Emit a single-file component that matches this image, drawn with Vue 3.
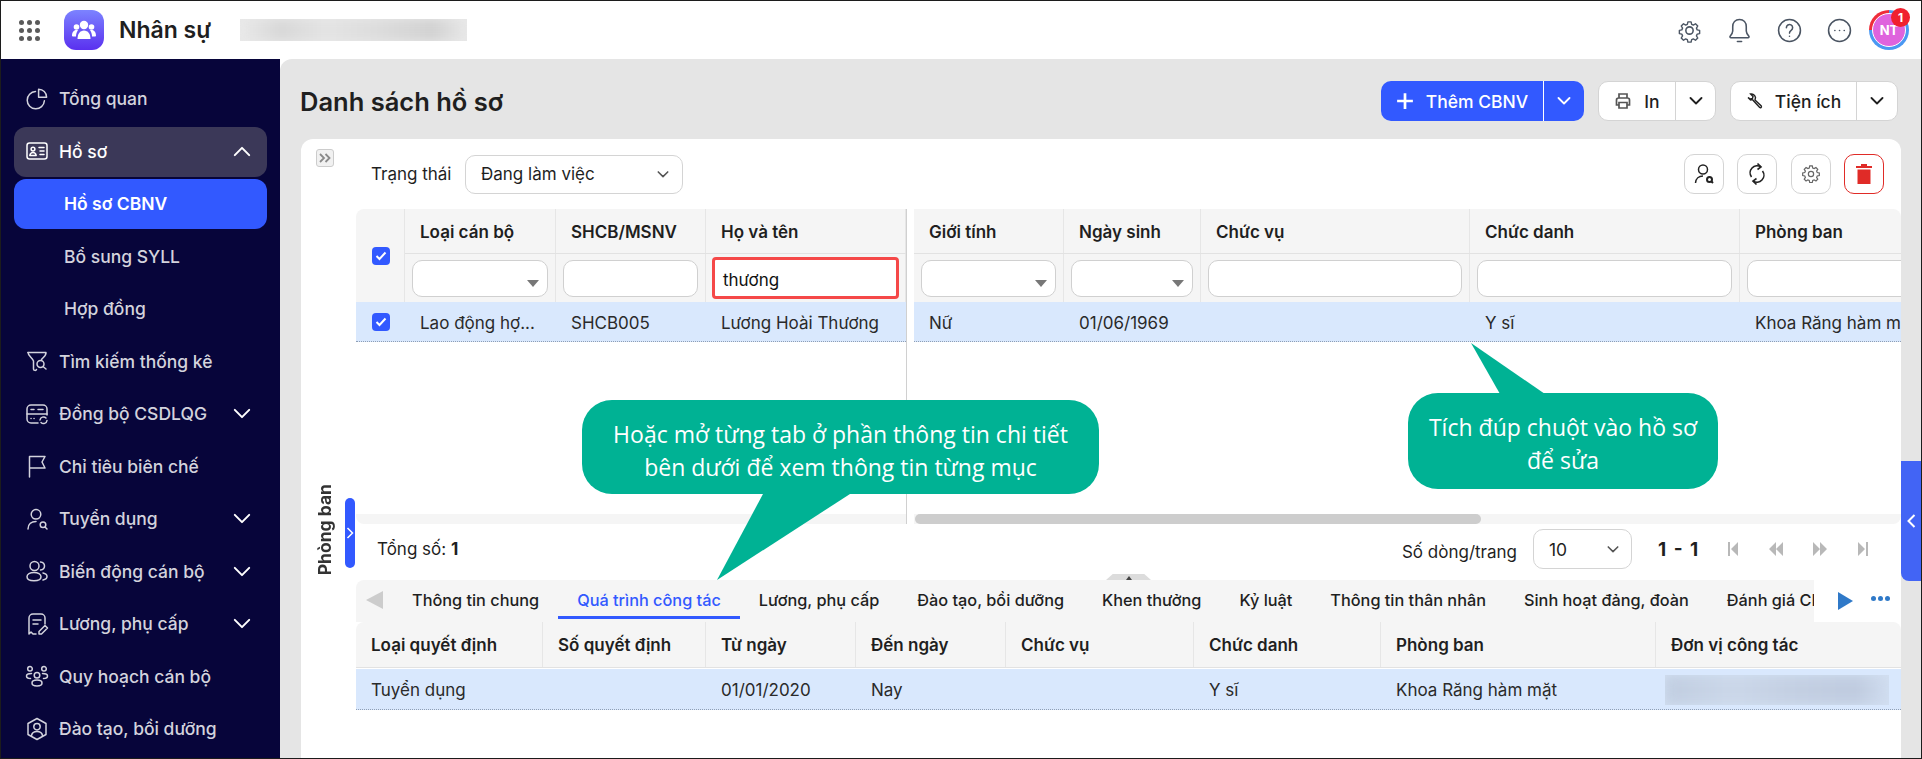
<script setup>
const menu = [
  { label: 'Tổng quan', icon: ['M10.5 4.6a8.6 8.6 0 1 0 8.9 9.2', 'M13.6 2.2a8 8 0 0 1 8 8h-8z'] },
  { label: 'Hồ sơ', open: true, arrow: 'up', icon: ['M4.5 4h15A2.5 2.5 0 0 1 22 6.5v11a2.5 2.5 0 0 1-2.5 2.5h-15A2.5 2.5 0 0 1 2 17.500v-11A2.500 2.500 0 0 1 4.500 4z', 'M8 8.200a1.900 1.900 0 1 0 0 3.800a1.900 1.900 0 0 0 0-3.800z', 'M4.800 16.500c.4-2 1.700-3 3.200-3s2.800 1 3.200 3z', 'M14 8.500h5M15 12h4M15 15.500h4'] },
  { label: 'Hồ sơ CBNV', sub: true, active: true },
  { label: 'Bổ sung SYLL', sub: true },
  { label: 'Hợp đồng', sub: true },
  { label: 'Tìm kiếm thống kê', icon: ['M3 3.500h18c.4 3-3 5-4.500 7', 'M3 3.500c0 3 4.500 5.500 5.500 8.500v8c0 1.500 2.500 2 3 .5', 'M15.500 11.500a3.500 3.500 0 1 0 0 7a3.500 3.500 0 0 0 0-7zM18 17.500l3 2.500'] },
  { label: 'Đồng bộ CSDLQG', arrow: 'down', icon: ['M13 21H6a4 4 0 0 1-4-4V7a4 4 0 0 1 4-4h12a4 4 0 0 1 4 4v6', 'M2 12h20', 'M6 7.500h3M13 7.500h5M6 16.500h.1M9 16.500h.1', 'M15 18a3.500 3.500 0 0 1 6-2M22 18.500a3.500 3.500 0 0 1-6 2'] },
  { label: 'Chỉ tiêu biên chế', icon: ['M4.500 23V2.500H20l-3 5.500 3 6H4.500'] },
  { label: 'Tuyển dụng', arrow: 'down', icon: ['M11 2.500a4.800 4.800 0 1 0 0 9.600a4.800 4.800 0 0 0 0-9.600z', 'M3 22c0-5 3.500-7.500 8-7.500', 'M18 15a2.800 2.800 0 1 0 0 5.600a2.800 2.800 0 0 0 0-5.600zM20 20l2 2'] },
  { label: 'Biến động cán bộ', arrow: 'down', icon: ['M9.500 2.500a4.500 4.500 0 1 0 0 9a4.500 4.500 0 0 0 0-9z', 'M9 13.500c-4 0-7 1.800-7 4.300s3 4 7 4s7-1.500 7-4s-3-4.300-7-4.300z', 'M15.500 3c2.500.3 4 2 4 4s-1.500 3.700-4 4', 'M18 14c2.500.6 4 1.800 4 3.500s-1.500 3-4 3.500'] },
  { label: 'Lương, phụ cấp', arrow: 'down', icon: ['M11 22H8l-2-2-2 2V6a4 4 0 0 1 4-4h8a4 4 0 0 1 4 4v6', 'M8 8h8M8 12h5', 'M14 22v-2.500l6-6 2.500 2.500-6 6z'] },
  { label: 'Quy hoạch cán bộ', icon: ['M5 2.500a2.300 2.300 0 1 0 0 4.600a2.300 2.300 0 0 0 0-4.600zM19 2.500a2.300 2.300 0 1 0 0 4.600a2.300 2.300 0 0 0 0-4.600z', 'M12 8.500a2.800 2.800 0 1 0 0 5.600a2.800 2.800 0 0 0 0-5.600z', 'M12 16c-3 0-5 1.200-5 3s2 3 5 3s5-1.200 5-3s-2-3-5-3z', 'M6.500 9.500c-3 0-5 1-5 2.500s1.500 2.500 4 2.500M17.500 9.500c3 0 5 1 5 2.500s-1.500 2.500-4 2.500'] },
  { label: 'Đào tạo, bồi dưỡng', icon: ['M12 1.500l9 5v11l-9 5-9-5v-11z', 'M12 6.500a3.200 3.200 0 1 0 0 6.400a3.200 3.200 0 0 0 0-6.400z', 'M6.500 18.500c.5-2.800 2.800-4 5.500-4s5 1.200 5.500 4'] }
]

const frozenCols = [
  { title: 'Loại cán bộ', w: 151, filter: 'select', value: 'Lao động hợ...' },
  { title: 'SHCB/MSNV', w: 150, filter: 'input', value: 'SHCB005' },
  { title: 'Họ và tên', w: 200, filter: 'search', value: 'Lương Hoài Thương' }
]
const scrollCols = [
  { title: 'Giới tính', w: 150, filter: 'select', value: 'Nữ' },
  { title: 'Ngày sinh', w: 137, filter: 'select', value: '01/06/1969' },
  { title: 'Chức vụ', w: 269, filter: 'input', value: '' },
  { title: 'Chức danh', w: 270, filter: 'input', value: 'Y sĩ' },
  { title: 'Phòng ban', w: 219, filter: 'input', value: 'Khoa Răng hàm mặt' }
]
const tabs = ['Thông tin chung', 'Quá trình công tác', 'Lương, phụ cấp', 'Đào tạo, bồi dưỡng', 'Khen thưởng', 'Kỷ luật', 'Thông tin thân nhân', 'Sinh hoạt đảng, đoàn', 'Đánh giá CBNV']
const detailCols = [
  { title: 'Loại quyết định', w: 187, value: 'Tuyển dụng' },
  { title: 'Số quyết định', w: 163, value: '' },
  { title: 'Từ ngày', w: 150, value: '01/01/2020' },
  { title: 'Đến ngày', w: 150, value: 'Nay' },
  { title: 'Chức vụ', w: 188, value: '' },
  { title: 'Chức danh', w: 187, value: 'Y sĩ' },
  { title: 'Phòng ban', w: 275, value: 'Khoa Răng hàm mặt' },
  { title: 'Đơn vị công tác', w: 245, value: '', blur: true }
]
</script>

<template>
  <div class="app">
    <header class="topbar">
      <div class="dots"><i v-for="n in 9" :key="n"></i></div>
      <div class="logo">
        <svg width="26" height="22" viewBox="0 0 26 22" fill="#fff">
          <circle cx="13" cy="6" r="4.200" />
          <circle cx="5.500" cy="8" r="2.800" />
          <circle cx="20.500" cy="8" r="2.800" />
          <path d="M6.500 20c0-5 2.500-8.500 6.500-8.500s6.500 3.500 6.500 8.500z" />
          <path d="M1 17c0-3.500 1.500-6 4.500-6c.6 0 1.100.1 1.500.3C5.800 13 5 15 5 17.500H2c-.6 0-1-.2-1-.5zM25 17c0-3.500-1.500-6-4.500-6c-.6 0-1.100.1-1.500.3c1.200 1.700 2 3.700 2 6.200h3c.6 0 1-.2 1-.5z" />
        </svg>
      </div>
      <div class="app-name">Nhân sự</div>
      <div class="blur-box"><div class="blur-fill"></div></div>
      <div class="top-icons">
        <svg class="top-icon" viewBox="0 0 24 24"><path d="M10.300 2.800h3.400l.6 2.600 1.800.8 2.300-1.400 2.400 2.400-1.400 2.300.8 1.800 2.600.6v3.400l-2.600.6-.8 1.800 1.400 2.300-2.400 2.400-2.300-1.400-1.800.8-.6 2.600h-3.400l-.6-2.600-1.800-.8-2.300 1.400-2.400-2.400 1.400-2.300-.8-1.800-2.600-.6v-3.400l2.600-.6.8-1.800-1.400-2.300 2.400-2.400 2.300 1.400 1.800-.8z" transform="translate(1.200 1.200) scale(.9)" /><circle cx="12" cy="12" r="3.500" /></svg>
        <svg class="top-icon" viewBox="0 0 24 24"><path d="M12 1.500c-4 0-6.500 3-6.500 7v4c0 2-1.200 3.500-2.500 5c-.5.600 0 1.500.8 1.500h16.400c.8 0 1.300-.9.800-1.500c-1.300-1.500-2.500-3-2.500-5v-4c0-4-2.500-7-6.500-7z" /><path d="M10 22.500h4" /></svg>
        <svg class="top-icon" viewBox="0 0 24 24"><circle cx="12" cy="12" r="10.500" /><path d="M9 9.300a3 3 0 1 1 4.600 2.500c-1 .7-1.600 1.300-1.600 2.700M12 17.500v.1" /></svg>
        <svg class="top-icon" viewBox="0 0 24 24"><circle cx="12" cy="12" r="10.500" /><path d="M7.500 12h.1M12 12h.1M16.500 12h.1" /></svg>
        <div class="avatar">
          <div class="avatar-in">NT</div>
          <span class="badge">1</span>
        </div>
      </div>
    </header>

    <div class="body">
      <aside class="sidebar">
        <div
          v-for="m in menu"
          :key="m.label"
          class="menu-item"
          :class="{ open: m.open, active: m.active, sub: m.sub }"
        >
          <svg v-if="m.icon" class="menu-icon" viewBox="0 0 24 24">
            <path v-for="d in m.icon" :key="d" :d="d" />
          </svg>
          <span class="menu-label">{{ m.label }}</span>
          <svg v-if="m.arrow" class="menu-arrow" viewBox="0 0 20 12">
            <path :d="m.arrow === 'up' ? 'M2 10l8-8 8 8' : 'M2 2l8 8 8-8'" />
          </svg>
        </div>
      </aside>

      <main class="main">
        <div class="title-row">
          <h1 class="title">Danh sách hồ sơ</h1>
          <div class="actions">
            <div class="split primary">
              <div class="split-main add-main">
                <svg width="18" height="18" viewBox="0 0 16 16"><path d="M8 1v14M1 8h14" stroke="#fff" stroke-width="2.400" /></svg>
                <span>Thêm CBNV</span>
              </div>
              <div class="split-arrow arrow-primary"><svg class="chev" viewBox="0 0 14 8"><path d="M1.500 1l5.500 5.500L12.500 1" /></svg></div>
            </div>
            <div class="split print">
              <div class="split-main print-main">
                <svg width="18" height="18" viewBox="0 0 18 18" fill="none" stroke="#555" stroke-width="1.700"><path d="M5 6V2h8v4M5 13H2.500V8A2 2 0 0 1 4.500 6h9a2 2 0 0 1 2 2v5H13" /><path d="M5 10.500h8V16H5z" /></svg>
                <span>In</span>
              </div>
              <div class="split-arrow print-arrow"><svg class="chev" viewBox="0 0 14 8"><path d="M1.500 1l5.500 5.500L12.500 1" /></svg></div>
            </div>
            <div class="split tools">
              <div class="split-main tools-main">
                <svg width="18" height="18" viewBox="0 0 18 18" fill="none" stroke="#222" stroke-width="1.400"><path d="M2 5.500L4.500 8l2-.5L7.700 9l6 6.500c1 .8 2.200-.4 1.600-1.500L9 8l.5-2.500C9 3 6.500 1.500 4.500 2L7 4.500 6.500 6.500 4.500 7z" /></svg>
                <span>Tiện ích</span>
              </div>
              <div class="split-arrow tools-arrow"><svg class="chev" viewBox="0 0 14 8"><path d="M1.500 1l5.500 5.500L12.500 1" /></svg></div>
            </div>
          </div>
        </div>

        <div class="work">
          <section class="card">
            <div class="rail">
              <div class="rail-btn">
                <svg width="12" height="10" viewBox="0 0 12 10" fill="none" stroke="#8a8a8a" stroke-width="1.800"><path d="M1 1l4 4-4 4M6.500 1l4 4-4 4" /></svg>
              </div>
              <div class="rail-side">
                <span class="rail-text">Phòng ban</span>
                <div class="rail-handle">
                  <svg width="8" height="12" viewBox="0 0 8 12" fill="none" stroke="#fff" stroke-width="1.500"><path d="M1.500 1l5 5-5 5" /></svg>
                </div>
              </div>
            </div>

            <div class="content">
              <div class="toolbar">
                <span class="tb-label">Trạng thái</span>
                <div class="tb-select">
                  <span>Đang làm việc</span>
                  <svg class="chev small" viewBox="0 0 14 8"><path d="M1.500 1l5.500 5.500L12.500 1" /></svg>
                </div>
                <div class="tb-icons">
                  <div class="tb-icon">
                    <svg width="24" height="24" viewBox="0 0 24 24" fill="none" stroke="#222" stroke-width="1.500"><circle cx="11" cy="7.500" r="4.500" /><path d="M3.500 21c.3-4.500 3.500-7 7.500-7" /><circle cx="17.500" cy="17.500" r="2.500" stroke-width="2" /><path d="M19.500 19.500l1.500 1.500" stroke-width="2" /></svg>
                  </div>
                  <div class="tb-icon">
                    <svg width="22" height="24" viewBox="0 0 22 24" fill="none" stroke="#222" stroke-width="1.600"><path d="M5.500 15a7 7 0 0 1 9.500-10" /><path d="M11.500 1.500L15 5l-3.500 2.500" /><path d="M16.500 9a7 7 0 0 1-9.500 10" /><path d="M10.500 22.500L7 19l3.500-2.500" /></svg>
                  </div>
                  <div class="tb-icon">
                    <svg width="18" height="18" viewBox="0 0 24 24" fill="none" stroke="#666" stroke-width="1.600"><path d="M10.300 2h3.400l.6 2.800 1.900.8 2.400-1.500 2.400 2.400-1.500 2.400.8 1.900 2.800.6v3.400l-2.800.6-.8 1.900 1.500 2.400-2.400 2.400-2.400-1.500-1.900.8-.6 2.800h-3.400l-.6-2.800-1.900-.8-2.400 1.500-2.400-2.400 1.500-2.400-.8-1.900-2.800-.6v-3.400l2.800-.6.8-1.900-1.500-2.400 2.400-2.400 2.400 1.500 1.900-.8z" transform="translate(0 -.8)" /><circle cx="12" cy="12" r="3.500" /></svg>
                  </div>
                  <div class="tb-icon danger">
                    <svg width="16" height="20" viewBox="0 0 16 20" fill="#e02b27"><path d="M5 0h6v2h5v2H0V2h5z" /><path d="M1.500 5.500h13V20h-13z" /></svg>
                  </div>
                </div>
              </div>

              <div class="grid-wrap">
                <div class="pane frozen">
                  <div class="head">
                    <div class="chk-cell">
                      <span class="chk"><svg width="12" height="10" viewBox="0 0 12 10" fill="none" stroke="#fff" stroke-width="2"><path d="M1.500 5l3 3 6-6.500" /></svg></span>
                    </div>
                    <div class="head-cols">
                      <div class="head-row">
                        <div v-for="c in frozenCols" :key="c.title" class="th" :style="{ width: c.w + 'px' }">{{ c.title }}</div>
                      </div>
                      <div class="filter-row">
                        <div v-for="c in frozenCols" :key="c.title" class="fc" :style="{ width: c.w + 'px' }">
                          <div v-if="c.filter === 'search'" class="search-box">thương</div>
                          <div v-else class="finput"><i v-if="c.filter === 'select'" class="tri"></i></div>
                        </div>
                      </div>
                    </div>
                  </div>
                  <div class="row">
                    <div class="chk-cell row-chk">
                      <span class="chk"><svg width="12" height="10" viewBox="0 0 12 10" fill="none" stroke="#fff" stroke-width="2"><path d="M1.500 5l3 3 6-6.500" /></svg></span>
                    </div>
                    <div v-for="c in frozenCols" :key="c.title" class="td" :style="{ width: c.w + 'px' }">{{ c.value }}</div>
                  </div>
                  <div class="hbar"></div>
                </div>
                <div class="gutter"><div class="gutter-head"></div></div>
                <div class="pane scroller">
                  <div class="head-cols">
                    <div class="head-row">
                      <div v-for="c in scrollCols" :key="c.title" class="th" :style="{ width: c.w + 'px' }">{{ c.title }}</div>
                    </div>
                    <div class="filter-row">
                      <div v-for="c in scrollCols" :key="c.title" class="fc" :style="{ width: c.w + 'px' }">
                        <div class="finput"><i v-if="c.filter === 'select'" class="tri"></i></div>
                      </div>
                    </div>
                  </div>
                  <div class="row">
                    <div v-for="c in scrollCols" :key="c.title" class="td" :style="{ width: c.w + 'px' }">{{ c.value }}</div>
                  </div>
                  <div class="hbar"><div class="thumb"></div></div>
                </div>
              </div>

              <div class="pager">
                <div class="total">Tổng số: <b>1</b></div>
                <div class="pager-right">
                  <span class="per-label">Số dòng/trang</span>
                  <div class="per-select">
                    <span>10</span>
                    <svg class="chev small" viewBox="0 0 14 8"><path d="M1.500 1l5.500 5.500L12.500 1" /></svg>
                  </div>
                  <b class="range">1 - 1</b>
                  <div class="pg-icons">
                    <svg width="12" height="18" viewBox="0 0 12 18" fill="#b8b8b8"><path d="M1 2h2v14H1zM11 2v14L4 9z" /></svg>
                    <svg width="16" height="18" viewBox="0 0 16 18" fill="#b8b8b8"><path d="M8 2v14L1 9zM15 2v14L8 9z" /></svg>
                    <svg width="16" height="18" viewBox="0 0 16 18" fill="#b8b8b8"><path d="M1 2v14l7-7zM8 2v14l7-7z" /></svg>
                    <svg width="12" height="18" viewBox="0 0 12 18" fill="#b8b8b8"><path d="M9 2h2v14H9zM1 2v14l7-7z" /></svg>
                  </div>
                </div>
                <div class="drag-handle"><i></i></div>
              </div>

              <div class="tabs-row">
                <div class="tabs">
                  <svg class="tab-prev" width="17" height="18" viewBox="0 0 17 18" fill="#ccc"><path d="M17 0v18L0 9z" /></svg>
                  <div v-for="t in tabs" :key="t" class="tab" :class="{ current: t === 'Quá trình công tác' }">{{ t }}</div>
                </div>
                <div class="tab-tools">
                  <svg width="15" height="18" viewBox="0 0 15 18" fill="#2f79c8"><path d="M0 0v18l15-9z" /></svg>
                  <div class="more"><i></i><i></i><i></i></div>
                </div>
              </div>

              <div class="detail">
                <div class="d-head">
                  <div v-for="c in detailCols" :key="c.title" class="d-th" :style="{ width: c.w + 'px' }">{{ c.title }}</div>
                </div>
                <div class="d-row">
                  <div v-for="c in detailCols" :key="c.title" class="d-td" :style="{ width: c.w + 'px' }">
                    <div v-if="c.blur" class="d-blur"><div class="d-blur-fill"></div></div>
                    <template v-else>{{ c.value }}</template>
                  </div>
                </div>
              </div>
            </div>
          </section>

          <div class="side-col">
            <div class="side-tab">
              <svg width="9" height="14" viewBox="0 0 9 14" fill="none" stroke="#fff" stroke-width="2"><path d="M7.500 1L1.500 7l6 6" /></svg>
            </div>
          </div>
        </div>
      </main>
    </div>

    <div class="callout left-call">
      Hoặc mở từng tab ở phần thông tin chi tiết<br />bên dưới để xem thông tin từng mục
      <svg class="tail tail-left" width="133" height="86" viewBox="0 0 133 86"><path d="M46 0L0 86 133 0z" fill="#00b294" /></svg>
    </div>
    <div class="callout right-call">
      Tích đúp chuột vào hồ sơ<br />để sửa
      <svg class="tail tail-right" width="74" height="51" viewBox="0 0 74 51"><path d="M29 51L0 0l74 51z" fill="#00b294" /></svg>
    </div>
  </div>
</template>

<style scoped>
.app {
  position: relative;
  width: 1922px;
  height: 759px;
  border: 1px solid #1c1c1c;
  box-sizing: border-box;
  display: flex;
  flex-direction: column;
  overflow: hidden;
  background: #fff;
  color: #1f1f1f;
}
.topbar {
  height: 58px;
  flex: none;
  display: flex;
  align-items: center;
  background: #fff;
  padding-left: 18px;
}
.dots {
  width: 21px;
  display: grid;
  grid-template-columns: repeat(3, 5px);
  gap: 3px;
}
.dots i {
  width: 5px;
  height: 5px;
  border-radius: 50%;
  background: #5a5a5a;
}
.logo {
  width: 40px;
  height: 40px;
  margin-left: 24px;
  border-radius: 12px;
  background: linear-gradient(#7c83ff, #5a30ef);
  display: flex;
  align-items: center;
  justify-content: center;
}
.app-name {
  margin-left: 15px;
  width: 121px;
  font-size: 23px;
  font-weight: 600;
  white-space: nowrap;
}
.blur-box {
  width: 227px;
  height: 22px;
  overflow: hidden;
  background: #e9e9e9;
}
.blur-fill {
  height: 100%;
  filter: blur(4px);
  background: linear-gradient(90deg, #e9e9e9 0, #d8d8d8 18%, #e4e4e4 38%, #dcdcdc 62%, #d2d2d2 85%, #e8e8e8 100%);
}
.top-icons {
  margin-left: auto;
  display: flex;
  align-items: center;
  margin-right: 12px;
}
.top-icon {
  width: 25px;
  height: 25px;
  margin-right: 25px;
  fill: none;
  stroke: #4b5563;
  stroke-width: 1.500;
  stroke-linecap: round;
  stroke-linejoin: round;
}
.avatar {
  position: relative;
  width: 40px;
  height: 40px;
  margin-left: -8px;
  border-radius: 50%;
  background: conic-gradient(#4a98f2 0 270deg, #ef2d3a 270deg 360deg);
  display: flex;
  align-items: center;
  justify-content: center;
}
.avatar-in {
  width: 32px;
  height: 32px;
  border-radius: 50%;
  border: 1px solid #fff;
  background: #df63dd;
  color: #fff;
  font-size: 13px;
  font-weight: 700;
  display: flex;
  align-items: center;
  justify-content: center;
}
.badge {
  position: absolute;
  top: -2px;
  right: -1px;
  width: 19px;
  height: 19px;
  border-radius: 50%;
  background: #f0202f;
  color: #fff;
  font-size: 12px;
  font-weight: 700;
  display: flex;
  align-items: center;
  justify-content: center;
}

.body {
  flex: 1;
  display: flex;
  min-height: 0;
  background: #fff;
}
.sidebar {
  width: 279px;
  flex: none;
  background: #07053a;
  padding-top: 15px;
  display: flex;
  flex-direction: column;
  gap: 2.5px;
  overflow: hidden;
}
.menu-item {
  flex: none;
  height: 50px;
  box-sizing: border-box;
  margin: 0 13px;
  padding-left: 11px;
  padding-bottom: 1px;
  border-radius: 12px;
  display: flex;
  align-items: center;
  color: #d3d3dd;
  font-size: 17.500px;
  font-weight: 500;
  white-space: nowrap;
}
.menu-item.open {
  background: #3b3858;
  color: #fff;
}
.menu-item.sub {
  padding-left: 50px;
}
.menu-item.active {
  background: #3259ff;
  color: #fff;
  font-weight: 600;
}
.menu-icon {
  width: 24px;
  height: 24px;
  flex: none;
  margin-right: 10px;
  fill: none;
  stroke: currentColor;
  stroke-width: 1.500;
  stroke-linecap: round;
  stroke-linejoin: round;
}
.menu-arrow {
  width: 18px;
  height: 11px;
  margin-left: auto;
  margin-right: 16px;
  fill: none;
  stroke: #fff;
  stroke-width: 2.200;
  stroke-linecap: round;
  stroke-linejoin: round;
}

.main {
  flex: 1;
  min-width: 0;
  background: #e5e5e5;
  border-top-left-radius: 12px;
  display: flex;
  flex-direction: column;
}
.title-row {
  height: 80px;
  flex: none;
  box-sizing: border-box;
  display: flex;
  align-items: center;
  padding: 4px 23px 0 20px;
}
.title {
  margin: 0;
  font-size: 25.500px;
  font-weight: 600;
  color: #1f1f1f;
}
.actions {
  margin-left: auto;
  display: flex;
  gap: 14px;
}
.split {
  height: 40px;
  display: flex;
  border-radius: 10px;
  background: #fff;
  box-sizing: border-box;
  font-size: 17.500px;
  font-weight: 500;
}
.split.print,
.split.tools {
  border: 1px solid #d4d4d4;
}
.split.primary {
  background: #3259ff;
  color: #fff;
  width: 203px;
}
.split.print {
  width: 118px;
}
.split.tools {
  width: 168px;
}
.split-main {
  display: flex;
  align-items: center;
  justify-content: center;
  gap: 12px;
}
.add-main {
  width: 162px;
}
.print-main {
  width: 76px;
}
.tools-main {
  width: 125px;
  gap: 11px;
}
.split-arrow {
  flex: 1;
  display: flex;
  align-items: center;
  justify-content: center;
  border-left: 1px solid #d4d4d4;
}
.arrow-primary {
  border-left-color: #fff;
}
.chev {
  width: 14px;
  height: 8px;
  fill: none;
  stroke: currentColor;
  stroke-width: 1.800;
  stroke-linecap: round;
  stroke-linejoin: round;
}
.chev.small {
  width: 12px;
  height: 7px;
  color: #555;
}

.work {
  flex: 1;
  min-height: 0;
  display: flex;
  padding-left: 21px;
}
.card {
  width: 1600px;
  flex: none;
  background: #fff;
  border-radius: 12px 12px 0 0;
  display: flex;
}
.side-col {
  flex: 1;
  padding-top: 322px;
}
.side-tab {
  height: 120px;
  background: #4264f5;
  border-bottom-left-radius: 8px;
  display: flex;
  align-items: center;
  justify-content: center;
}
.rail {
  width: 55px;
  flex: none;
  display: flex;
  flex-direction: column;
}
.rail-btn {
  width: 18px;
  height: 18px;
  margin: 10px 0 0 15px;
  box-sizing: border-box;
  border: 1px solid #ccc;
  border-radius: 3px;
  background: #f1f1f1;
  display: flex;
  align-items: center;
  justify-content: center;
}
.rail-side {
  margin: 317px 0 0 15px;
  height: 91px;
  display: flex;
  align-items: flex-end;
  gap: 12px;
}
.rail-text {
  writing-mode: vertical-rl;
  transform: rotate(180deg);
  font-size: 17.500px;
  font-weight: 700;
  line-height: 17px;
  white-space: nowrap;
  color: #333;
}
.rail-handle {
  width: 10px;
  height: 70px;
  margin-bottom: 7px;
  border-radius: 5px;
  background: #3259ff;
  display: flex;
  align-items: center;
  justify-content: center;
}

.content {
  flex: 1;
  min-width: 0;
  display: flex;
  flex-direction: column;
}
.toolbar {
  height: 70px;
  flex: none;
  display: flex;
  align-items: center;
  padding: 0 17px 0 15px;
  font-size: 17px;
}
.tb-label {
  width: 94px;
  white-space: nowrap;
}
.tb-select {
  width: 218px;
  height: 39px;
  box-sizing: border-box;
  border: 1px solid #d4d4d4;
  border-radius: 10px;
  padding: 0 13px 0 15px;
  display: flex;
  align-items: center;
  justify-content: space-between;
}
.tb-icons {
  margin-left: auto;
  display: flex;
  gap: 13.500px;
}
.tb-icon {
  width: 40px;
  height: 40px;
  box-sizing: border-box;
  border: 1px solid #d4d4d4;
  border-radius: 10px;
  display: flex;
  align-items: center;
  justify-content: center;
}
.tb-icon.danger {
  border-color: #e02b27;
}

.grid-wrap {
  height: 315px;
  flex: none;
  display: flex;
  font-size: 17px;
}
.pane {
  display: flex;
  flex-direction: column;
}
.frozen {
  width: 550px;
  flex: none;
}
.scroller {
  flex: 1;
  min-width: 0;
  overflow: hidden;
}
.head {
  display: flex;
}
.head-cols {
  background: #f5f5f5;
  flex: none;
}
.frozen .head {
  background: #f5f5f5;
  border-top-left-radius: 8px;
}
.scroller .head-cols {
  border-top-right-radius: 8px;
}
.chk-cell {
  width: 49px;
  flex: none;
  box-sizing: border-box;
  display: flex;
  align-items: center;
  padding-left: 16px;
}
.head .chk-cell {
  border-right: 1px solid #e6e6e6;
  padding-top: 1px;
}
.row-chk {
  padding-top: 1px;
}
.chk {
  width: 18px;
  height: 18px;
  border-radius: 4px;
  background: #3259ff;
  display: flex;
  align-items: center;
  justify-content: center;
}
.head-row {
  height: 45px;
  display: flex;
  border-bottom: 1px solid #e2e2e2;
  box-sizing: border-box;
}
.th {
  flex: none;
  box-sizing: border-box;
  padding: 1px 0 0 15px;
  display: flex;
  align-items: center;
  border-right: 1px solid #e6e6e6;
  font-weight: 600;
  white-space: nowrap;
}
.filter-row {
  height: 48px;
  display: flex;
}
.fc {
  flex: none;
  box-sizing: border-box;
  padding: 6px 7px 5px 7px;
  border-right: 1px solid #e6e6e6;
}
.finput {
  position: relative;
  height: 37px;
  box-sizing: border-box;
  background: #fff;
  border: 1px solid #d0d0d0;
  border-radius: 10px;
}
.tri {
  position: absolute;
  right: 8px;
  top: 19px;
  border-left: 6px solid transparent;
  border-right: 6px solid transparent;
  border-top: 7px solid #777;
}
.search-box {
  height: 42px;
  margin: -3px -1px 0;
  box-sizing: border-box;
  background: #fff;
  border: 3px solid #f54848;
  border-radius: 4px;
  padding: 6px 0 0 8px;
  font-size: 17px;
  line-height: 28px;
  color: #111;
}
.row {
  height: 40px;
  flex: none;
  display: flex;
  align-items: center;
  background: #d9e8fd;
  border-bottom: 1px dotted #8f9fb5;
  box-sizing: border-box;
}
.td {
  flex: none;
  box-sizing: border-box;
  padding: 2px 0 0 15px;
  white-space: nowrap;
  color: #2a2a2a;
}
.hbar {
  height: 10px;
  margin-top: auto;
  flex: none;
  background: #f5f5f5;
  border-bottom-left-radius: 8px;
}
.scroller .hbar {
  border-radius: 0 0 8px 0;
}
.thumb {
  width: 566px;
  height: 100%;
  margin-left: 1px;
  background: #cdcdcd;
  border-radius: 5px;
}
.gutter {
  width: 8px;
  flex: none;
  box-sizing: border-box;
  border-left: 1px solid #d0d0d0;
}
.gutter-head {
  height: 93px;
  border-right: 1px solid #d0d0d0;
  margin-right: -1px;
}

.pager {
  position: relative;
  height: 56px;
  flex: none;
  box-sizing: border-box;
  display: flex;
  align-items: center;
  padding: 0 32px 6px 21px;
  font-size: 17px;
}
.total b {
  font-weight: 700;
}
.pager-right {
  margin-left: auto;
  display: flex;
  align-items: center;
}
.per-label {
  margin-top: 5px;
}
.per-select {
  width: 99px;
  height: 40px;
  margin-left: 16px;
  box-sizing: border-box;
  border: 1px solid #d4d4d4;
  border-radius: 10px;
  display: flex;
  align-items: center;
  justify-content: space-between;
  padding: 0 12px 0 15px;
  font-size: 17.500px;
}
.range {
  margin-left: 26px;
  width: 42px;
  font-size: 19px;
  font-weight: 700;
  word-spacing: 3px;
  white-space: nowrap;
}
.pg-icons {
  margin-left: 27px;
  width: 142px;
  display: flex;
  align-items: center;
  justify-content: space-between;
}
.drag-handle {
  position: absolute;
  left: 750px;
  bottom: 0;
  width: 45px;
  height: 6px;
  background: #dcdcdc;
  clip-path: polygon(15% 0, 85% 0, 100% 100%, 0 100%);
  display: flex;
  justify-content: center;
}
.drag-handle i {
  margin-top: 1px;
  border-left: 3px solid transparent;
  border-right: 3px solid transparent;
  border-bottom: 4px solid #444;
}

.tabs-row {
  height: 42px;
  flex: none;
  display: flex;
  font-size: 16.300px;
}
.tabs {
  width: 1458px;
  flex: none;
  overflow: hidden;
  display: flex;
  align-items: stretch;
  background: #f5f5f5;
  border-top-left-radius: 8px;
  white-space: nowrap;
}
.tab-prev {
  flex: none;
  margin: 11px 10px 0 10px;
}
.tab {
  flex: none;
  height: 39px;
  line-height: 40px;
  padding: 0 19px;
  box-sizing: border-box;
  font-weight: 500;
}
.tab.current {
  color: #3259ff;
  border-bottom: 3px solid #3259ff;
}
.tab-tools {
  flex: 1;
  display: flex;
  align-items: center;
  padding-left: 24px;
  gap: 18px;
}
.more {
  display: flex;
  gap: 2px;
  margin-top: -6px;
}
.more i {
  width: 5px;
  height: 5px;
  border-radius: 50%;
  background: #2f79c8;
}

.detail {
  flex: none;
  font-size: 17px;
}
.d-head {
  height: 46px;
  display: flex;
  background: #f5f5f5;
  border-bottom: 1px solid #e2e2e2;
  box-sizing: border-box;
  border-radius: 8px 8px 0 0;
}
.d-th {
  flex: none;
  box-sizing: border-box;
  padding-left: 15px;
  display: flex;
  align-items: center;
  border-right: 1px solid #e6e6e6;
  font-weight: 600;
  white-space: nowrap;
}
.d-th:last-child {
  border-right: 0;
}
.d-row {
  height: 41px;
  margin-top: 1px;
  display: flex;
  align-items: center;
  background: #d9e8fd;
  border-bottom: 1px dotted #8f9fb5;
  box-sizing: border-box;
}
.d-td {
  flex: none;
  box-sizing: border-box;
  padding: 1px 0 0 15px;
  white-space: nowrap;
  color: #2a2a2a;
}
.d-blur {
  width: 224px;
  height: 30px;
  margin-left: -6px;
  overflow: hidden;
  background: #d3e0f2;
}
.d-blur-fill {
  height: 100%;
  filter: blur(6px);
  background: linear-gradient(90deg, #c0cde0, #cbd7e9 30%, #c4d0e3 55%, #bfcbdf 85%, #cfdcef);
}

.callout {
  position: absolute;
  box-sizing: border-box;
  background: #00b294;
  color: #fff;
  border-radius: 30px;
  font-family: 'Open Sans', sans-serif;
  font-size: 23px;
  line-height: 32.500px;
  text-align: center;
}
.left-call {
  left: 581px;
  top: 399px;
  width: 517px;
  height: 94px;
  padding-top: 18px;
}
.right-call {
  left: 1407px;
  top: 392px;
  width: 310px;
  height: 96px;
  padding-top: 18px;
}
.tail {
  position: absolute;
}
.tail-left {
  left: 135px;
  top: 94px;
}
.tail-right {
  left: 63px;
  top: -50px;
}
</style>

<style>
body {
  font-family: Inter, 'Noto Sans', sans-serif;
}
</style>
